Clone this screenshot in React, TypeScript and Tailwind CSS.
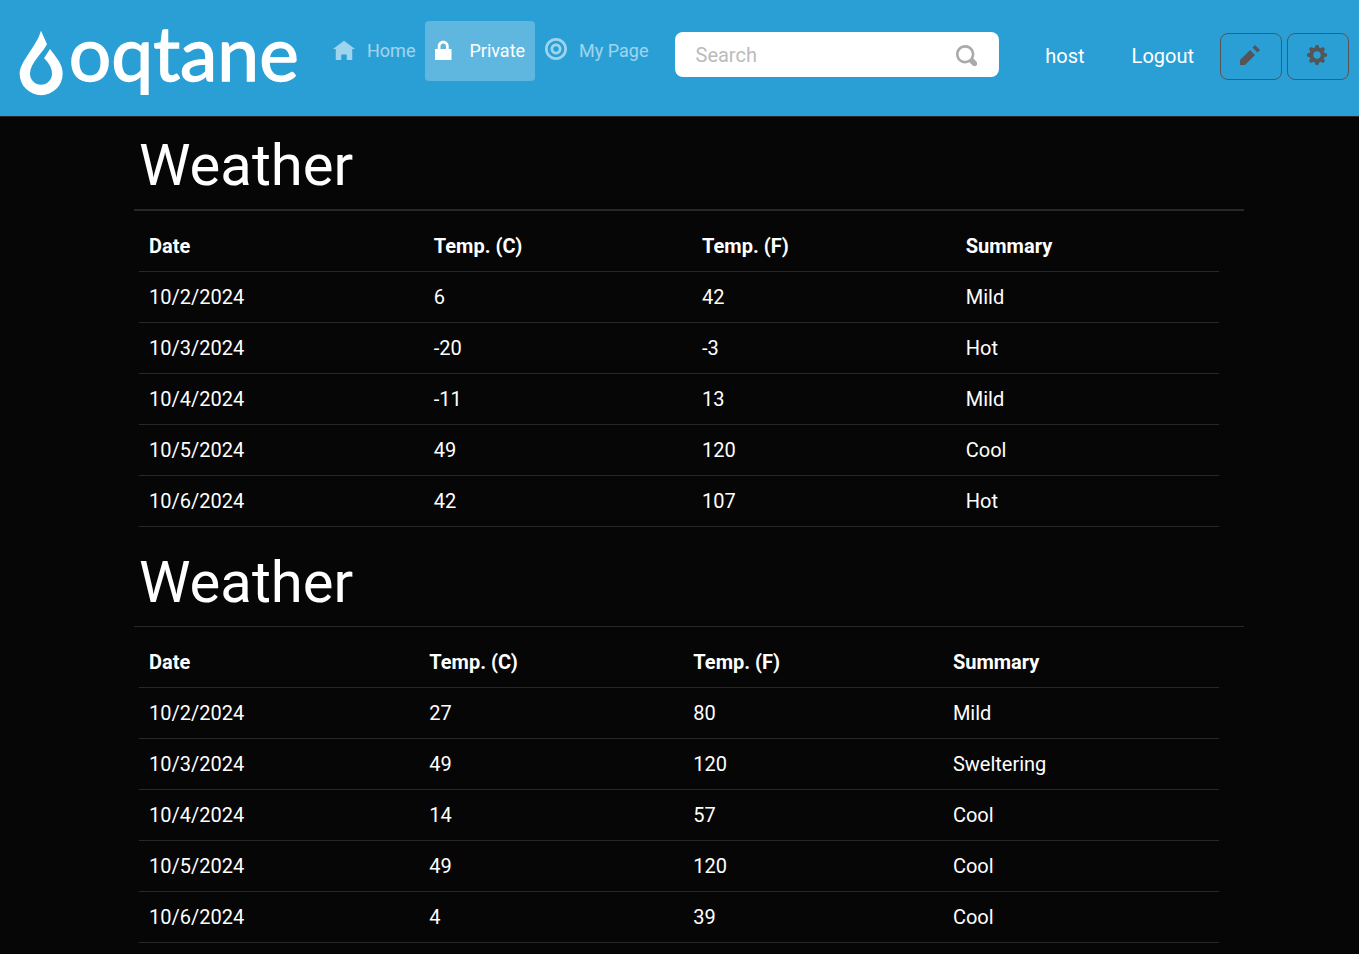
/**
 * Oqtane site page
 *
 * Displays:
 * - Site header with logo, page navigation, search and user controls
 * - Two weather forecast modules
 */

import { useState } from 'react';

type Forecast = {
  date: string;
  tempC: number;
  tempF: number;
  summary: string;
};

const firstForecasts: Forecast[] = [
  { date: '10/2/2024', tempC: 6, tempF: 42, summary: 'Mild' },
  { date: '10/3/2024', tempC: -20, tempF: -3, summary: 'Hot' },
  { date: '10/4/2024', tempC: -11, tempF: 13, summary: 'Mild' },
  { date: '10/5/2024', tempC: 49, tempF: 120, summary: 'Cool' },
  { date: '10/6/2024', tempC: 42, tempF: 107, summary: 'Hot' },
];

const secondForecasts: Forecast[] = [
  { date: '10/2/2024', tempC: 27, tempF: 80, summary: 'Mild' },
  { date: '10/3/2024', tempC: 49, tempF: 120, summary: 'Sweltering' },
  { date: '10/4/2024', tempC: 14, tempF: 57, summary: 'Cool' },
  { date: '10/5/2024', tempC: 49, tempF: 120, summary: 'Cool' },
  { date: '10/6/2024', tempC: 4, tempF: 39, summary: 'Cool' },
];

// Open Iconic shapes, drawn on an 8x8 grid
const icons = {
  home: { viewBox: '0 -1 8 8', d: 'M4 0l-4 3h1v4h2v-2h2v2h2v-4.03l1 .03-4-3z' },
  lock: {
    viewBox: '1 -1 8 8',
    d: 'M4 0c-1.1 0-2 .9-2 2v1h-1v4h6v-4h-1v-1c0-1.1-.9-2-2-2zm0 1c.56 0 1 .44 1 1v1h-2v-1c0-.56.44-1 1-1z',
  },
  target: {
    viewBox: '0 0 8 8',
    d: 'M4 0c-2.2 0-4 1.8-4 4s1.8 4 4 4 4-1.8 4-4-1.8-4-4-4zm0 1c1.66 0 3 1.34 3 3s-1.34 3-3 3-3-1.34-3-3 1.34-3 3-3zm0 1c-1.1 0-2 .9-2 2s.9 2 2 2 2-.9 2-2-.9-2-2-2zm0 1c.56 0 1 .44 1 1s-.44 1-1 1-1-.44-1-1 .44-1 1-1z',
  },
  search: {
    viewBox: '0 0 8 8',
    d: 'M3.5 0c-1.93 0-3.5 1.57-3.5 3.5s1.57 3.5 3.5 3.5c.59 0 1.17-.14 1.66-.41a1 1 0 0 0 .13.13l1 1a1.02 1.02 0 1 0 1.44-1.44l-1-1a1 1 0 0 0-.16-.13c.27-.49.44-1.06.44-1.66 0-1.93-1.55-3.5-3.5-3.5zm0 1c1.39 0 2.5 1.11 2.5 2.5 0 .66-.24 1.27-.66 1.72l-.03.03a1 1 0 0 0-.13.13c-.44.4-1.04.63-1.69.63-1.39 0-2.5-1.11-2.5-2.5s1.11-2.5 2.5-2.5z',
  },
  pencil: { viewBox: '0 0 8 8', d: 'M6 0l-1 1 2 2 1-1-2-2zm-2 2l-4 4v2h2l4-4-2-2z' },
  cog: {
    viewBox: '0 0 8 8',
    d: 'M3.5 0l-.5 1.19c-.1.03-.19.08-.28.13l-1.19-.5-.72.72.5 1.19c-.05.1-.09.18-.13.28l-1.19.5v1l1.19.5c.04.1.08.18.13.28l-.5 1.19.72.72 1.19-.5c.09.04.18.09.28.13l.5 1.19h1l.5-1.19c.09-.04.19-.08.28-.13l1.19.5.72-.72-.5-1.19c.04-.09.09-.19.13-.28l1.19-.5v-1l-1.19-.5c-.03-.09-.08-.19-.13-.28l.5-1.19-.72-.72-1.19.5c-.09-.04-.19-.09-.28-.13l-.5-1.19h-1zm.5 2.5c.83 0 1.5.67 1.5 1.5s-.67 1.5-1.5 1.5-1.5-.67-1.5-1.5.67-1.5 1.5-1.5z',
  },
};

type IconName = keyof typeof icons;

function Icon({ name, className }: { name: IconName; className: string }) {
  const { viewBox, d } = icons[name];
  return (
    <svg viewBox={viewBox} className={className} fill="currentColor" aria-hidden="true">
      <path d={d} />
    </svg>
  );
}

function Logo() {
  return (
    <svg viewBox="57 60 843 201" className="h-[67px] w-[281px] overflow-visible" fill="white">
      <path d="M123 62L141 103C128 128 90 160 90 191A33 33 0 0 0 156 191C156 173 145 157 132 145L150 117C172 146 188 164 188 191A64.500 64.500 0 0 1 59 191C59 155 108 112 123 62z" />
      <text x="206" y="212" fontFamily="Lato, sans-serif" fontSize="225" stroke="white" strokeWidth="4">
        oqtane
      </text>
    </svg>
  );
}

const navItems: { label: string; icon: IconName }[] = [
  { label: 'Home', icon: 'home' },
  { label: 'Private', icon: 'lock' },
  { label: 'My Page', icon: 'target' },
];

function Header() {
  const [activePage, setActivePage] = useState('Private');
  const [query, setQuery] = useState('');

  return (
    <header className="flex min-h-[117px] items-start border-b border-[#282828] bg-[#2a9fd6] pr-[10px] pl-[19px]">
      <a href="#" aria-label="Oqtane" className="mt-[30px] mr-[23px] shrink-0">
        <Logo />
      </a>

      {/* Page navigation */}
      <nav className="mt-[21px] flex shrink-0">
        {navItems.map((item) => (
          <a
            key={item.label}
            href="#"
            onClick={() => setActivePage(item.label)}
            className={`flex h-[60px] items-center gap-3 rounded px-[10px] text-lg ${
              activePage === item.label ? 'bg-white/25 text-white' : 'text-white/55'
            }`}
          >
            <Icon name={item.icon} className="mb-1 size-[22px]" />
            <span>{item.label}</span>
          </a>
        ))}
      </nav>

      {/* Search */}
      <form
        role="search"
        onSubmit={(e) => e.preventDefault()}
        className="mt-8 ml-4 flex h-[45px] w-[324px] items-center rounded-lg bg-white pr-[22px] pl-[21px]"
      >
        <input
          type="text"
          aria-label="Search"
          placeholder="Search"
          value={query}
          onChange={(e) => setQuery(e.target.value)}
          className="min-w-0 flex-1 text-[#555555] outline-none placeholder:text-[#bbbbbb]"
        />
        <button type="submit" aria-label="Submit search" className="pt-[2px] text-[#aaaaaa]">
          <Icon name="search" className="size-[21px]" />
        </button>
      </form>

      {/* User and admin controls */}
      <div className="mt-[33px] ml-auto flex shrink-0 items-center">
        <a href="#" className="mr-[47px] pb-[2px]">host</a>
        <button type="button" className="mr-[26px] pb-[2px]">Logout</button>
        <div className="flex gap-[5px]">
          <button
            type="button"
            aria-label="Edit page"
            className="flex h-[47px] w-[62px] items-center justify-center rounded-lg border border-[#555555] pr-[2px] pb-1 text-[#555555]"
          >
            <Icon name="pencil" className="size-5" />
          </button>
          <button
            type="button"
            aria-label="Control panel"
            className="flex h-[47px] w-[62px] items-center justify-center rounded-lg border border-[#555555] pr-[2px] pb-1 text-[#555555]"
          >
            <Icon name="cog" className="size-5" />
          </button>
        </div>
      </div>
    </header>
  );
}

function WeatherModule({ forecasts, ruleClass }: { forecasts: Forecast[]; ruleClass: string }) {
  return (
    <section>
      <h2 className="mb-[9px] ml-[5px] text-[58px] leading-[70px]">Weather</h2>
      <hr className={`mb-[10px] border-[#282828] ${ruleClass}`} />
      <div className="mr-[25px] ml-[5px]">
        <table className="w-full border-separate border-spacing-0 text-left">
          <thead>
            <tr>
              {['Date', 'Temp. (C)', 'Temp. (F)', 'Summary'].map((title) => (
                <th key={title} className="border-b border-[#282828] p-[10px] font-bold">
                  {title}
                </th>
              ))}
            </tr>
          </thead>
          <tbody>
            {forecasts.map((forecast) => (
              <tr key={forecast.date}>
                <td className="border-b border-[#282828] p-[10px]">{forecast.date}</td>
                <td className="border-b border-[#282828] p-[10px]">{forecast.tempC}</td>
                <td className="border-b border-[#282828] p-[10px]">{forecast.tempF}</td>
                <td className="border-b border-[#282828] p-[10px]">{forecast.summary}</td>
              </tr>
            ))}
          </tbody>
        </table>
      </div>
    </section>
  );
}

export default function App() {
  return (
    <div className="min-h-screen bg-[#060606] font-[Roboto,sans-serif] text-[20px] leading-[30px] text-white">
      <Header />
      <main className="mx-auto flex max-w-[1129px] flex-col gap-5 pt-[13px] pl-[19px]">
        <WeatherModule forecasts={firstForecasts} ruleClass="border-t-2" />
        <WeatherModule forecasts={secondForecasts} ruleClass="border-t" />
      </main>
    </div>
  );
}
